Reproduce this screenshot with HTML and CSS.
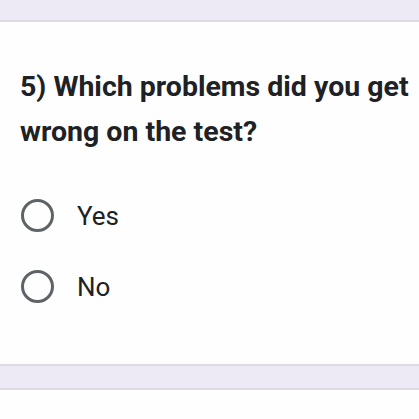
FILE: index.html
```html
<!DOCTYPE html>
<html>
<head>
<meta charset="utf-8">
<link rel="stylesheet" href="styles.css">
</head>
<body>
<div class="band top"></div>
<section class="card">
  <h2 class="question">5) Which problems did you get wrong on the test?</h2>
  <div class="options">
    <label class="option"><span class="radio"></span><span class="label">Yes</span></label>
    <label class="option"><span class="radio"></span><span class="label">No</span></label>
  </div>
</section>
<div class="band bottom"></div>
<div class="rest"></div>
</body>
</html>
```
FILE: styles.css
```css
html, body {
  margin: 0;
  padding: 0;
  background: #fefefe;
  font-family: Roboto, "Liberation Sans", sans-serif;
  color: #202124;
}
.band {
  background: #edeaf6;
}
.band.top {
  height: 20px;
  border-bottom: 2px solid #dddbe3;
}
.band.bottom {
  height: 22px;
  border-top: 2px solid #dddbe3;
  border-bottom: 2px solid #dddbe3;
}
.card {
  background: #fefefe;
  height: 342px;
  box-sizing: border-box;
  padding: 42px 4px 0 20px;
}
.question {
  margin: 0;
  font-size: 28.5px;
  font-weight: 700;
  line-height: 45px;
  letter-spacing: 0;
}
.options {
  display: flex;
  flex-direction: column;
  gap: 38px;
  margin-top: 45px;
}
.option {
  display: flex;
  align-items: center;
  height: 33px;
}
.radio {
  width: 33px;
  height: 33px;
  box-sizing: border-box;
  border: 3.5px solid #5f6368;
  border-radius: 50%;
  margin-left: 1px;
  flex: none;
}
.label {
  margin-left: 23px;
  font-size: 26px;
  color: #202124;
}
.rest {
  height: 40px;
}
```
